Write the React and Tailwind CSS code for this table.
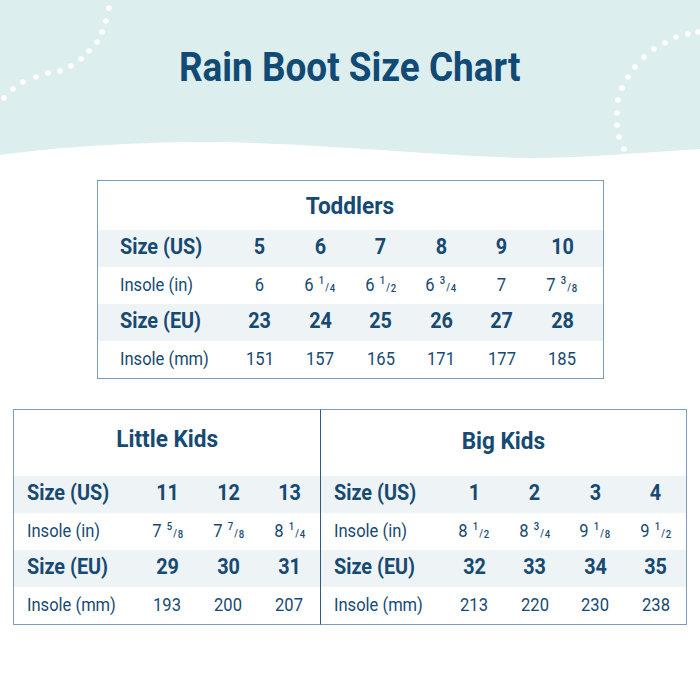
import React from 'react'

const toddlers = {
  title: 'Toddlers',
  us: ['5', '6', '7', '8', '9', '10'],
  inch: ['6', ['6', '1', '4'], ['6', '1', '2'], ['6', '3', '4'], '7', ['7', '3', '8']],
  eu: ['23', '24', '25', '26', '27', '28'],
  mm: ['151', '157', '165', '171', '177', '185'],
}

const littleKids = {
  title: 'Little Kids',
  us: ['11', '12', '13'],
  inch: [['7', '5', '8'], ['7', '7', '8'], ['8', '1', '4']],
  eu: ['29', '30', '31'],
  mm: ['193', '200', '207'],
}

const bigKids = {
  title: 'Big Kids',
  us: ['1', '2', '3', '4'],
  inch: [['8', '1', '2'], ['8', '3', '4'], ['9', '1', '8'], ['9', '1', '2']],
  eu: ['32', '33', '34', '35'],
  mm: ['213', '220', '230', '238'],
}

const leftDots = [
  [4, 98], [13, 89], [23, 82], [36, 77], [48, 73], [60, 71], [71, 66],
  [81, 59], [89, 51], [97, 42], [102, 32], [106, 21], [109, 8],
]

const rightDots = [
  [698, 32], [688, 34], [676, 37], [665, 43], [654, 49], [644, 57], [635, 67],
  [628, 77], [622, 88], [618, 100], [617, 113], [617, 125], [619, 137], [624, 149],
]

function Value({ v }) {
  if (Array.isArray(v)) {
    return (
      <span className="whitespace-nowrap">
        {v[0]}
        <span className="ml-[6px] text-[11px] font-medium">
          <span className="relative top-[-7px]">{v[1]}</span>
          <span className="mx-[1px]">/</span>
          <span className="relative top-[1px]">{v[2]}</span>
        </span>
      </span>
    )
  }
  return <span>{v}</span>
}

function Row({ grid, label, values, bold, shaded, labelPad }) {
  const text = bold
    ? 'text-[22px] font-bold scale-x-[0.9]'
    : 'text-[19px] scale-x-[0.87]'
  return (
    <div className={`grid h-[37px] items-center ${grid} ${shaded ? 'bg-[#eef3f5]' : 'bg-white'}`}>
      <div className={labelPad}>
        <span className={`inline-block origin-left leading-none ${text}`}>{label}</span>
      </div>
      {values.map((v, i) => (
        <div key={i} className="text-center">
          <span className={`inline-block leading-none ${text}`}>
            <Value v={v} />
          </span>
        </div>
      ))}
    </div>
  )
}

function SizeTable({ data, grid, titleH, labelPad }) {
  return (
    <>
      <div className={`flex items-center justify-center ${titleH}`}>
        <h2 className="inline-block scale-x-[0.94] text-[24px] font-bold leading-none">{data.title}</h2>
      </div>
      <Row grid={grid} labelPad={labelPad} label="Size (US)" values={data.us} bold shaded />
      <Row grid={grid} labelPad={labelPad} label="Insole (in)" values={data.inch} />
      <Row grid={grid} labelPad={labelPad} label="Size (EU)" values={data.eu} bold shaded />
      <Row grid={grid} labelPad={labelPad} label="Insole (mm)" values={data.mm} />
    </>
  )
}

export default function App() {
  return (
    <div className="relative w-[700px] h-[700px] overflow-hidden bg-white font-['Roboto',sans-serif] text-[#164a72]">
      {/* шапка с волной */}
      <div className="relative">
        <div className="h-[142px] bg-[#ddeeee] pt-[47px] text-center">
          <h1 className="inline-block scale-x-[0.9] text-[41px] font-bold leading-[40px] text-[#114a74]">Rain Boot Size Chart</h1>
        </div>
        <svg className="block h-[18px] w-full" viewBox="0 0 700 18" preserveAspectRatio="none">
          <path d="M0 0 H700 V7 C640 11 580 16 530 16 C430 14 300 -1 190 0 C120 1 50 6 0 13 Z" fill="#ddeeee" />
        </svg>
        <svg className="absolute left-0 top-0 h-[160px] w-[700px]" viewBox="0 0 700 160">
          {leftDots.concat(rightDots).map(([x, y], i) => (
            <circle key={i} cx={x} cy={y} r="2.8" fill="#ffffff" />
          ))}
        </svg>
      </div>

      {/* Toddlers */}
      <div className="mx-auto mt-[20px] w-[507px] border border-[#7d9cba]">
        <SizeTable
          data={toddlers}
          grid="grid-cols-[132px_repeat(6,1fr)] pr-[10px]"
          titleH="h-[49px]"
          labelPad="pl-[22px]"
        />
      </div>

      {/* Little Kids + Big Kids */}
      <div className="ml-[13px] mt-[30px] flex w-[674px]">
        <div className="w-[307px] border-y border-l border-[#7d9cba]">
          <SizeTable
            data={littleKids}
            grid="grid-cols-[123px_repeat(3,1fr)]"
            titleH="h-[66px] pb-[8px]"
            labelPad="pl-[13px]"
          />
        </div>
        <div className="w-[367px] border border-[#7d9cba] border-l-[#2d5b83]">
          <SizeTable
            data={bigKids}
            grid="grid-cols-[123px_repeat(4,1fr)]"
            titleH="h-[66px] pb-[4px]"
            labelPad="pl-[13px]"
          />
        </div>
      </div>
    </div>
  )
}
